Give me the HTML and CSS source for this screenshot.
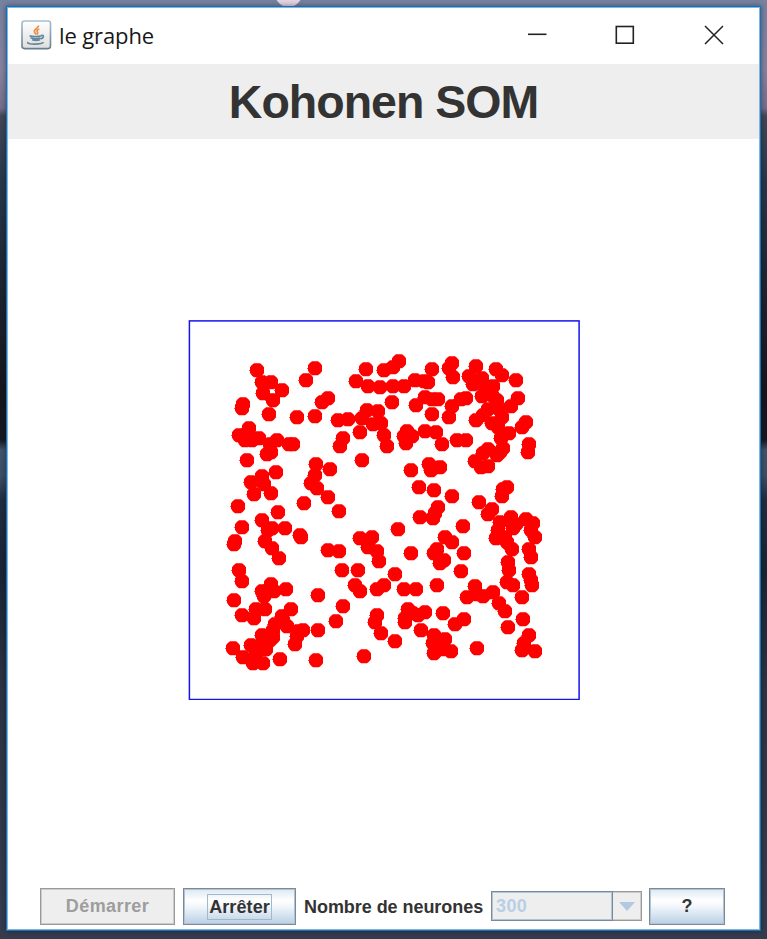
FILE: index.html
```html
<!DOCTYPE html>
<html lang="fr">
<head>
<meta charset="utf-8">
<title>le graphe</title>
<link rel="stylesheet" href="styles.css">
</head>
<body>
<div class="desktop">
<i class="flower"></i>
<main class="window">
  <header class="titlebar">
    <svg class="java" viewBox="0 0 31 30" width="31" height="30">
      <defs>
        <linearGradient id="tile" x1="0" y1="0" x2="0" y2="1"><stop offset="0" stop-color="#fff"/><stop offset="1" stop-color="#dedede"/></linearGradient>
        <linearGradient id="rim" x1="0" y1="0" x2="0" y2="1"><stop offset="0" stop-color="#a9bfcd"/><stop offset="1" stop-color="#647d8f"/></linearGradient>
      </defs>
      <rect x="1" y="1" width="28.5" height="27.6" rx="2.5" fill="url(#tile)" stroke="url(#rim)" stroke-width="1.6"/>
      <path d="M17.500 5.500c.6 2.500-5 3.500-4 6.500.4 1 1.200 1.600 1.400 2.500M18.300 9c-2.800 1-2.600 2.200-1.800 3.200.5.8.2 1.600-.5 2.300" fill="none" stroke="#ee8b3c" stroke-width="1.700"/>
      <path d="M8.500 15.800c3 1.200 9 1.100 12 0M9.500 17.800c3 1.200 7.500 1.100 10 .2M11 19.700c2 .7 6 .7 8 0M20 15.500c3.500-1 3 2.700-.5 3.300M7 22c-2.500 2.600 14 2.800 15.500.2" fill="none" stroke="#67889f" stroke-width="1.700"/>
    </svg>
    <span class="caption">le graphe</span>
    <svg class="controls" viewBox="0 0 196 20" width="196" height="20" fill="none" stroke="#222" stroke-width="1.600">
      <path d="M0 9.300h18.500"/><rect x="88.300" y="1.500" width="17" height="16.700"/><path d="M177 1l18 18M195 1l-18 18" stroke-width="1.500"/>
    </svg>
  </header>
  <h1 class="heading">Kohonen SOM</h1>
  <section class="canvas">
    <svg viewBox="188 320 392 380" width="392" height="380">
      <defs>
        <marker id="dot" markerUnits="userSpaceOnUse" markerWidth="18" markerHeight="18" refX="0" refY="-.2" viewBox="-9 -9 18 18">
          <path d="M-3-7H3L5.200-5.200 7-3V3L5.200 5.200 3 7H-3L-5.200 5.200-7 2.500V.8L-8.200.3-7-.4V-3L-5.200-5.200Z" fill="#f00"/>
        </marker>
      </defs>
      <rect x="189.400" y="320.900" width="389.700" height="378.600" fill="#fff" stroke="#1414ee" stroke-width="1.500"/>
      <polyline class="neurons" points="257,370 262,382 271,382 282,390 263,393 273,400 269,414 243,404 242,408 315,368 306,380 297,417 315,416 328,398 322,402 249,428 239,435 245,440 252,440 259,438 270,444 277,440 289,444 293,444 267,454 271,452 247,460
      366,369 384,370 393,367 399,361 356,381 368,386 380,387 393,386 404,386 415,380 424,381 428,382 432,369 392,402 416,405 425,397 432,399 432,414 367,410 378,411 338,420 348,419 362,418 373,424 381,423 360,432 343,438 340,446 384,435 387,446 407,431 404,436 412,436 406,443 425,431 436,432
      452,363 449,368 453,377 476,366 469,376 473,380 482,378 496,369 502,375 516,380 473,384 482,396 493,386 485,388 492,395 497,400 438,399 466,398 461,399 452,406 449,417 518,398 511,406 476,420 483,415 488,409 498,408 502,417 492,423 498,427 526,422 522,427 509,433 501,438 442,444 457,440 466,440 529,444 528,452 488,449 503,448 483,453 497,455
      276,472 262,476 251,482 264,484 254,494 271,493 238,506 278,512 262,520 242,527 272,528 285,528 268,530 235,541 234,544 265,541 272,548 279,558 304,503 300,535 301,537 316,464 330,469 315,475 311,483 317,488 328,497 339,511 328,550 339,551 362,460 360,538 372,537 368,547 377,551
      411,470 429,464 440,467 431,470 419,487 434,490 452,496 438,507 420,517 433,518 435,513 398,529 463,526 445,537 452,542 437,549 434,553 411,553 464,553 440,563 444,560 475,461 481,467 488,466 500,452 479,502 492,509 488,514 507,487 503,489 502,496 511,517 500,522 498,530 496,538 505,537 513,528 516,524 526,519 533,523 531,530 535,537 507,542 512,549 529,549 531,557
      239,570 242,581 234,600 271,584 262,591 274,591 286,589 264,596 256,609 265,609 242,615 254,618 291,609 318,595 343,606 336,621 282,616 283,620 275,624 287,626 298,631 303,630 318,630 297,636 295,644 273,630 273,637 262,635 270,640 233,648 251,645 262,643 266,649 243,657 256,653 253,663 263,663 280,659 316,660 364,656 342,570 358,570 355,585 360,591 379,561 377,589 384,585 377,615 375,622 381,633
      395,574 461,571 404,589 416,589 437,585 408,609 405,618 405,622 418,615 425,612 413,613 443,613 421,630 464,619 455,624 395,641 434,635 445,639 433,643 434,653 442,649 451,651 477,648 475,586 467,597 477,594 483,596 493,592 499,603 505,611 508,627 523,619 522,597 529,574 531,580 532,585 508,562 509,570 507,582 513,585 529,635 524,643 522,650 535,651"/>
    </svg>
  </section>
  <footer class="toolbar">
    <button class="btn start" disabled>Démarrer</button>
    <button class="btn stop"><span class="focus">Arrêter</span></button>
    <label class="label">Nombre de neurones</label>
    <div class="combo"><span class="value">300</span><span class="drop"><i class="arrow"></i></span></div>
    <button class="btn help">?</button>
  </footer>
</main>
</div>
</body>
</html>
```
FILE: styles.css
```css
* { box-sizing: border-box; }
body { margin: 0; font-family: "Liberation Sans", Arial, sans-serif; }
.desktop {
  position: relative;
  width: 767px;
  height: 939px;
  overflow: hidden;
  padding: 6px;
  background: linear-gradient(#76829f 0, #85839f 70px, #746f8b 108px, #414857 116px, #27384a 180px, #1d2632 280px, #16171c 390px, #151923 440px, #40546a 450px, #3c4f64 476px, #202d40 500px, #192534 570px, #2c3443 690px, #353c4e 939px);
}
.flower {
  position: absolute;
  left: 275px;
  top: -20px;
  width: 27px;
  height: 27px;
  border-radius: 50%;
  background: #e4d3e2;
}
.window {
  position: relative;
  width: 755px;
  height: 925px;
  display: flex;
  flex-direction: column;
  background: #fff;
  border: 1px solid #1d6eb2;
  box-shadow: inset 0 0 0 1px #7db6e3, 0 0 5px rgba(10, 20, 40, .5);
}
.titlebar { height: 57px; display: flex; align-items: center; padding: 0 36px 2px 14px; }
.caption {
  margin-left: 7px;
  font: 22px/30px "Open Sans", "Noto Sans", sans-serif;
  letter-spacing: -.12px;
  color: #181818;
}
.controls { margin-left: auto; }
.heading {
  height: 75px;
  margin: 0 1px;
  background: #eee;
  color: #333;
  font-size: 46.500px;
  letter-spacing: -1px;
  line-height: 76px;
  text-align: center;
}
.canvas { flex: 1; display: flex; justify-content: center; padding: 181px 0 0 1px; }
.neurons { fill: none; stroke: none; marker: url(#dot); }
.toolbar { height: 42px; display: flex; align-items: flex-start; padding-left: 33px; font-size: 18px; font-weight: bold; color: #333; }
.btn {
  height: 37px;
  padding: 0;
  font: inherit;
  color: #333;
  border: 1px solid #7a8a99;
  box-shadow: inset 0 0 0 1px #b3c2d2;
  background: linear-gradient(#dce7f2 0, #fff 32%, #f4f8fc 48%, #b9cfe5 100%);
  border-radius: 0;
}
.start { width: 135px; background: #eee; border-color: #999; box-shadow: inset 0 0 0 1px #ccc; color: #9d9d9d; letter-spacing: .4px; }
.stop { width: 113px; margin-left: 8px; }
.focus { display: inline-block; height: 26px; padding: 0 1px; line-height: 25px; border: 1px solid #a3b8cc; letter-spacing: .1px; }
.label { width: 179px; margin-left: 8px; line-height: 38px; white-space: nowrap; letter-spacing: -.05px; }
.combo { width: 151px; height: 30px; margin: 3px 7px 0 8px; display: flex; background: #eee; border: 1px solid #999; box-shadow: inset 0 0 0 1px #ccc; }
.value { width: 122px; margin: -1px 0 -1px -1px; padding-left: 4px; line-height: 28px; color: #b8cfe5; border: 1px solid #7a8a99; box-shadow: inset 0 0 0 1px #b0c5da; letter-spacing: .4px; }
.drop { flex: 1; display: flex; align-items: center; justify-content: center; }
.arrow { border: 8px solid transparent; border-top: 9px solid #b1c9e2; border-bottom: 0; }
.help { width: 76px; }
```
